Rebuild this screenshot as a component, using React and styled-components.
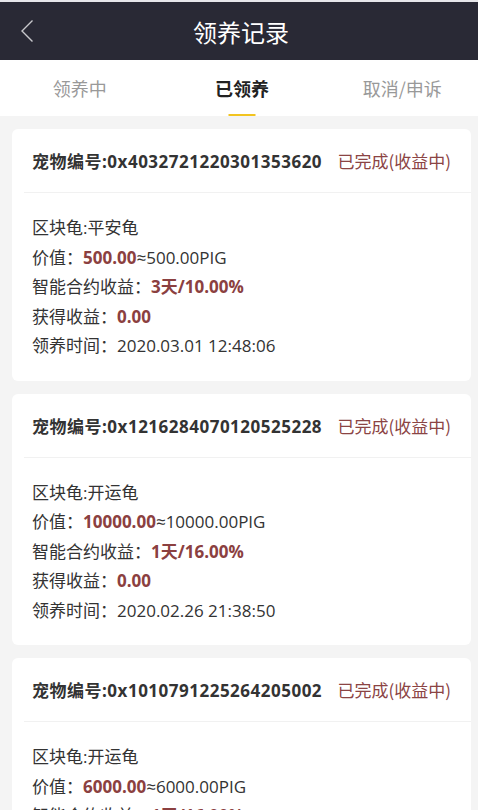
import React from "react";
import styled, { createGlobalStyle } from "styled-components";

const Global = createGlobalStyle`
  html, body { margin: 0; padding: 0; background: #f4f4f4; }
  body { font-family: "Open Sans", "Noto Sans CJK SC", sans-serif; }
  * { box-sizing: border-box; }
`;

const Page = styled.div`
  width: 478px;
  min-height: 810px;
  background: #f4f4f4;
  border-top: 2px solid #e6e6ea;
`;

const Header = styled.header`
  height: 58px;
  background: #292935;
  display: flex;
  align-items: center;
  justify-content: center;
  position: relative;
`;

const Back = styled.button`
  position: absolute;
  left: 14px;
  top: 14px;
  width: 26px;
  height: 30px;
  padding: 0;
  border: none;
  background: transparent;
  display: flex;
  align-items: center;
  justify-content: center;
`;

const Title = styled.h1`
  margin: 0 0 0 4px;
  color: #fff;
  font-size: 24px;
  font-weight: 400;
  font-family: "Noto Sans CJK SC", sans-serif;
`;

const Tabs = styled.nav`
  height: 56px;
  background: #fff;
  display: grid;
  grid-template-columns: 1fr 1fr 1fr;
`;

const Tab = styled.div`
  position: relative;
  display: flex;
  align-items: center;
  justify-content: center;
  font-size: 18px;
  font-family: "Noto Sans CJK SC", sans-serif;
  color: ${(p) => (p.$active ? "#222" : "#999")};
  font-weight: ${(p) => (p.$active ? 700 : 400)};
  padding-left: ${(p) => p.$shift || 0}px;
`;

const Underline = styled.span`
  position: absolute;
  bottom: 0;
  left: 50%;
  transform: translateX(-50%);
  margin-left: 3px;
  width: 27px;
  height: 2px;
  background: #f2c420;
`;

const List = styled.main`
  display: flex;
  flex-direction: column;
  gap: 13px;
  padding: 13px 7px 0 12px;
`;

const Card = styled.section`
  background: #fff;
  border-radius: 6px;
`;

const CardHead = styled.div`
  height: 64px;
  display: flex;
  align-items: center;
  justify-content: space-between;
  padding: 0 20px 0 8px;
  margin-left: 12px;
  border-bottom: 1px solid #f1f1f1;
`;

const PetNo = styled.div`
  font-size: 17px;
  font-weight: 700;
  color: #333;
  letter-spacing: 0.5px;
`;

const Status = styled.div`
  font-size: 17px;
  color: #8b4444;
  font-family: "Noto Sans CJK SC", sans-serif;
`;

const Body = styled.div`
  padding: 20px;
  display: flex;
  flex-direction: column;
`;

const Line = styled.div`
  font-size: 17px;
  line-height: 29.5px;
  color: #333;
  white-space: nowrap;
`;

const Strong = styled.b`
  color: #8b4040;
  font-weight: 700;
`;

const records = [
  {
    id: "0x4032721220301353620",
    kind: "平安龟",
    value: "500.00",
    pig: "500.00PIG",
    earn: "3天/10.00%",
    got: "0.00",
    time: "2020.03.01 12:48:06",
  },
  {
    id: "0x1216284070120525228",
    kind: "开运龟",
    value: "10000.00",
    pig: "10000.00PIG",
    earn: "1天/16.00%",
    got: "0.00",
    time: "2020.02.26 21:38:50",
  },
  {
    id: "0x1010791225264205002",
    kind: "开运龟",
    value: "6000.00",
    pig: "6000.00PIG",
    earn: "1天/16.00%",
    got: "0.00",
    time: "2020.02.25 10:12:33",
  },
];

export default function App() {
  return (
    <Page>
      <Global />
      <Header>
        <Back aria-label="back">
          <svg width="14" height="24" viewBox="0 0 14 24">
            <path d="M12.5 1.5 L2 12 L12.5 22.5" fill="none" stroke="#c8c8cc" strokeWidth="1.4" />
          </svg>
        </Back>
        <Title>领养记录</Title>
      </Header>
      <Tabs>
        <Tab>领养中</Tab>
        <Tab $active $shift={6}>
          已领养
          <Underline />
        </Tab>
        <Tab $shift={8}>取消/申诉</Tab>
      </Tabs>
      <List>
        {records.map((r) => (
          <Card key={r.id}>
            <CardHead>
              <PetNo>宠物编号:{r.id}</PetNo>
              <Status>已完成(收益中)</Status>
            </CardHead>
            <Body>
              <Line>区块龟:{r.kind}</Line>
              <Line>
                价值：<Strong>{r.value}</Strong>≈{r.pig}
              </Line>
              <Line>
                智能合约收益：<Strong>{r.earn}</Strong>
              </Line>
              <Line>
                获得收益：<Strong>{r.got}</Strong>
              </Line>
              <Line>领养时间：{r.time}</Line>
            </Body>
          </Card>
        ))}
      </List>
    </Page>
  );
}
